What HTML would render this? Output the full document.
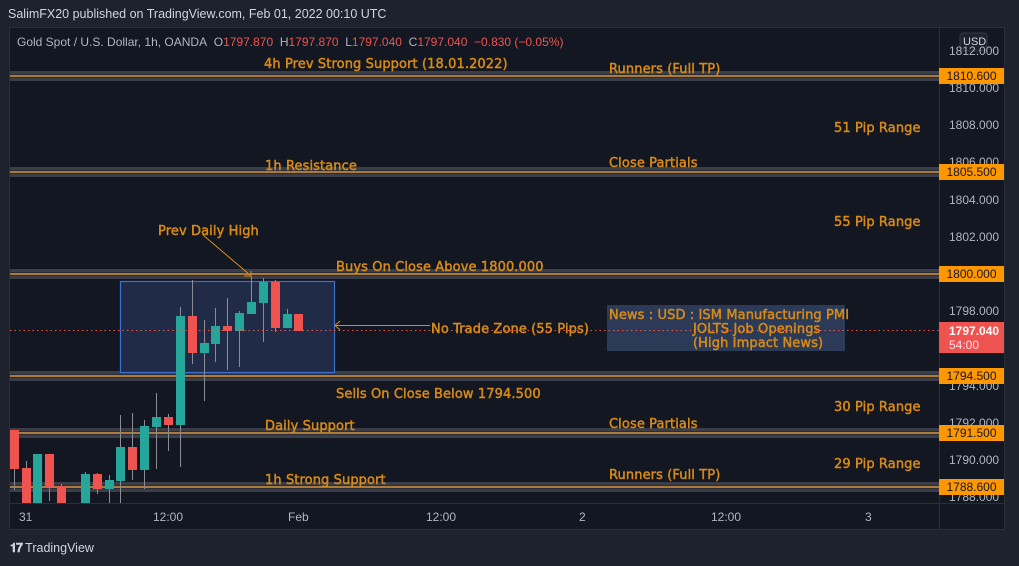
<!DOCTYPE html>
<html><head><meta charset="utf-8"><style>
body{margin:0;width:1019px;height:566px;background:#1e222d;overflow:hidden;font-family:"Liberation Sans","DejaVu Sans",sans-serif;position:relative}
.a{position:absolute;white-space:nowrap}
.o{color:#d98b16;font-family:"DejaVu Sans",sans-serif;font-weight:normal;-webkit-text-stroke:0.45px #d98b16;font-size:13px;letter-spacing:0.1px;margin-top:2px}
.p{color:#b2b5be;font-size:12px}
.tag{position:absolute;left:939px;width:65px;height:16px;background:#ff9800;color:#131722;font-size:12px;text-align:center;line-height:16px}
</style></head><body>
<div class="a" style="left:8px;top:7px;color:#d1d4dc;font-size:12.5px">SalimFX20 published on TradingView.com, Feb 01, 2022 00:10 UTC</div>
<div class="a" style="left:9px;top:27px;width:996px;height:503px;background:#131722;border:1px solid #2a2e39;box-sizing:border-box"></div>
<svg class="a" style="left:0;top:0" width="1019" height="566">
<g fill="#3b3e48">
<rect x="10" y="71" width="929" height="10"/><rect x="10" y="167" width="929" height="10"/>
<rect x="10" y="269" width="929" height="10"/><rect x="10" y="371" width="929" height="10"/>
<rect x="10" y="428" width="929" height="10"/><rect x="10" y="482" width="929" height="10"/>
</g>
<g stroke="#2a2d36" stroke-width="1">
<line x1="10" x2="939" y1="74.5" y2="74.5"/><line x1="10" x2="939" y1="77.5" y2="77.5"/>
<line x1="10" x2="939" y1="170.5" y2="170.5"/><line x1="10" x2="939" y1="173.5" y2="173.5"/>
<line x1="10" x2="939" y1="272.5" y2="272.5"/><line x1="10" x2="939" y1="275.5" y2="275.5"/>
<line x1="10" x2="939" y1="374.5" y2="374.5"/><line x1="10" x2="939" y1="377.5" y2="377.5"/>
<line x1="10" x2="939" y1="431.5" y2="431.5"/><line x1="10" x2="939" y1="434.5" y2="434.5"/>
<line x1="10" x2="939" y1="485.5" y2="485.5"/><line x1="10" x2="939" y1="488.5" y2="488.5"/>
</g>
<g stroke="#f0a030" stroke-width="1.3">
<line x1="10" x2="939" y1="76" y2="76"/><line x1="10" x2="939" y1="172" y2="172"/>
<line x1="10" x2="939" y1="274" y2="274"/><line x1="10" x2="939" y1="376" y2="376"/>
<line x1="10" x2="939" y1="433" y2="433"/><line x1="10" x2="939" y1="487" y2="487"/>
</g>
<rect x="120.5" y="281.5" width="214" height="91" fill="#1f2b47" stroke="#3d6fd0" stroke-width="1.2"/>
<rect x="607" y="305" width="238" height="46" fill="#2a3a57"/>
<g stroke="#8a8d96" stroke-width="1">
<line x1="14.5" x2="14.5" y1="430" y2="490"/><line x1="26.5" x2="26.5" y1="461" y2="503"/>
<line x1="49.5" x2="49.5" y1="454" y2="501"/><line x1="61.5" x2="61.5" y1="484" y2="503"/>
<line x1="85.5" x2="85.5" y1="472" y2="503"/><line x1="97.5" x2="97.5" y1="473" y2="494"/>
<line x1="109.5" x2="109.5" y1="475" y2="503"/><line x1="120.5" x2="120.5" y1="415" y2="503"/>
<line x1="132.5" x2="132.5" y1="413" y2="480"/><line x1="144.5" x2="144.5" y1="420" y2="489"/>
<line x1="156.5" x2="156.5" y1="393" y2="469"/><line x1="168.5" x2="168.5" y1="414" y2="451"/>
<line x1="180.5" x2="180.5" y1="307" y2="467"/><line x1="192.5" x2="192.5" y1="280" y2="364"/>
<line x1="204.5" x2="204.5" y1="320" y2="401"/><line x1="215.5" x2="215.5" y1="308" y2="362"/>
<line x1="227.5" x2="227.5" y1="298" y2="370"/><line x1="239.5" x2="239.5" y1="311" y2="367"/>
<line x1="251.5" x2="251.5" y1="276" y2="314"/><line x1="263.5" x2="263.5" y1="278" y2="342"/>
<line x1="275.5" x2="275.5" y1="280" y2="332"/><line x1="287.5" x2="287.5" y1="309" y2="328"/>
</g>
<g fill="#ef5350">
<rect x="10" y="430" width="9" height="39"/><rect x="22" y="468" width="9" height="35"/>
<rect x="45" y="454" width="9" height="33"/><rect x="57" y="486" width="9" height="17"/>
<rect x="93" y="474" width="9" height="15"/><rect x="128" y="447" width="9" height="23"/>
<rect x="164" y="417" width="9" height="8"/><rect x="188" y="316" width="9" height="37"/>
<rect x="223" y="326" width="9" height="5"/><rect x="271" y="282" width="9" height="46"/>
<rect x="294" y="314" width="9" height="17"/>
</g>
<g fill="#26a69a">
<rect x="33" y="454" width="9" height="49"/><rect x="81" y="474" width="9" height="29"/>
<rect x="105" y="480" width="9" height="9"/><rect x="116" y="447" width="9" height="34"/>
<rect x="140" y="426" width="9" height="44"/><rect x="152" y="417" width="9" height="10"/>
<rect x="176" y="316" width="9" height="109"/><rect x="200" y="343" width="9" height="10"/>
<rect x="211" y="326" width="9" height="18"/><rect x="235" y="313" width="9" height="18"/>
<rect x="247" y="302" width="9" height="12"/><rect x="259" y="282" width="9" height="21"/>
<rect x="283" y="314" width="9" height="14"/>
</g>
<line x1="10" x2="939" y1="330.5" y2="330.5" stroke="#ef5350" stroke-dasharray="1.5,3" stroke-width="1"/>
<g stroke="#d98b16" stroke-width="1" fill="none">
<line x1="203" y1="235" x2="250" y2="275"/><polyline points="244,276 251,276 251,271"/>
<line x1="335" y1="325.5" x2="430" y2="325.5"/><polyline points="340,321 335,325.5 340,330"/>
</g>
<line x1="939.5" x2="939.5" y1="27" y2="530" stroke="#2a2e39"/>
<line x1="10" x2="1005" y1="503.5" y2="503.5" stroke="#2a2e39"/>
<rect x="960" y="33" width="27" height="18" rx="3" fill="#1e222d" stroke="#363a45"/>
</svg>
<div class="a" style="left:17px;top:35px;font-size:12px;color:#b2b5be">Gold Spot / U.S. Dollar, 1h, OANDA&nbsp; O<span style="color:#ef5350">1797.870</span>&nbsp; H<span style="color:#ef5350">1797.870</span>&nbsp; L<span style="color:#ef5350">1797.040</span>&nbsp; C<span style="color:#ef5350">1797.040</span>&nbsp; <span style="color:#ef5350">−0.830 (−0.05%)</span></div>
<div class="a o" style="left:264px;top:55px">4h Prev Strong Support (18.01.2022)</div>
<div class="a o" style="left:609px;top:60px">Runners (Full TP)</div>
<div class="a o" style="left:834px;top:119px">51 Pip Range</div>
<div class="a o" style="left:609px;top:154px">Close Partials</div>
<div class="a o" style="left:265px;top:157px">1h Resistance</div>
<div class="a o" style="left:834px;top:213px">55 Pip Range</div>
<div class="a o" style="left:158px;top:222px">Prev Daily High</div>
<div class="a o" style="left:336px;top:258px">Buys On Close Above 1800.000</div>
<div class="a o" style="left:609px;top:306px">News : USD : ISM Manufacturing PMI</div>
<div class="a o" style="left:693px;top:320px">JOLTS Job Openings</div>
<div class="a o" style="left:693px;top:334px">(High Impact News)</div>
<div class="a o" style="left:431px;top:320px">No Trade Zone (55 Pips)</div>
<div class="a o" style="left:336px;top:385px">Sells On Close Below 1794.500</div>
<div class="a o" style="left:834px;top:398px">30 Pip Range</div>
<div class="a o" style="left:609px;top:415px">Close Partials</div>
<div class="a o" style="left:265px;top:417px">Daily Support</div>
<div class="a o" style="left:834px;top:455px">29 Pip Range</div>
<div class="a o" style="left:609px;top:466px">Runners (Full TP)</div>
<div class="a o" style="left:265px;top:471px">1h Strong Support</div>
<div class="a" style="left:963px;top:36px;font-size:11px;color:#d1d4dc">USD</div>
<div class="a p" style="left:949px;top:44px">1812.000</div>
<div class="a p" style="left:949px;top:81px">1810.000</div>
<div class="a p" style="left:949px;top:118px">1808.000</div>
<div class="a p" style="left:949px;top:155px">1806.000</div>
<div class="a p" style="left:949px;top:193px">1804.000</div>
<div class="a p" style="left:949px;top:230px">1802.000</div>
<div class="a p" style="left:949px;top:304px">1798.000</div>
<div class="a p" style="left:949px;top:379px">1794.000</div>
<div class="a p" style="left:949px;top:416px">1792.000</div>
<div class="a p" style="left:949px;top:453px">1790.000</div>
<div class="a p" style="left:949px;top:490px">1788.000</div>
<div class="tag" style="top:68px">1810.600</div>
<div class="tag" style="top:164px">1805.500</div>
<div class="tag" style="top:266px">1800.000</div>
<div class="tag" style="top:368px">1794.500</div>
<div class="tag" style="top:425px">1791.500</div>
<div class="tag" style="top:479px">1788.600</div>
<div class="a" style="left:939px;top:322px;width:65px;height:31px;background:#ef5350;color:#fff;font-size:12px;font-weight:bold;padding-left:10px;box-sizing:border-box;line-height:14px;padding-top:2px">1797.040<br><span style="font-weight:normal;color:#fde">54:00</span></div>
<div class="a p" style="left:19px;top:510px">31</div>
<div class="a p" style="left:153px;top:510px">12:00</div>
<div class="a p" style="left:288px;top:510px">Feb</div>
<div class="a p" style="left:426px;top:510px">12:00</div>
<div class="a p" style="left:579px;top:510px">2</div>
<div class="a p" style="left:711px;top:510px">12:00</div>
<div class="a p" style="left:865px;top:510px">3</div>
<div class="a" style="left:10px;top:541px;font-size:12.5px;color:#d1d4dc"><b style="letter-spacing:-1px">𝟏𝟕</b> TradingView</div>
</body></html>
